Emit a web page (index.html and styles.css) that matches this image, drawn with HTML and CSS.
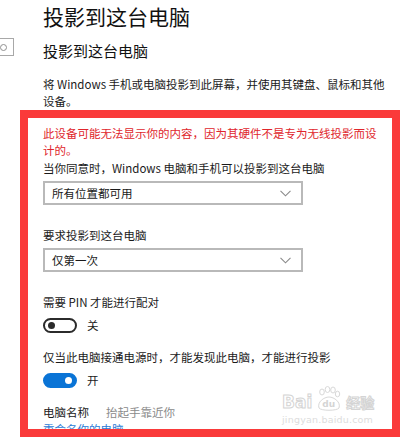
FILE: index.html
```html
<!doctype html>
<html>
<head>
    <meta charset="utf-8">
    <link rel="stylesheet" href="styles.css">
</head>
<body>
<div class="page">
    <div class="nav">
        <div class="search"><span class="search-ico"></span></div>
    </div>
    <div class="content">
        <h1 class="title">投影到这台电脑</h1>
        <h2 class="subtitle">投影到这台电脑</h2>
        <p class="desc">将 Windows 手机或电脑投影到此屏幕，并使用其键盘、鼠标和其他设备。</p>
        <p class="warn">此设备可能无法显示你的内容，因为其硬件不是专为无线投影而设计的。</p>

        <div class="label">当你同意时，Windows 电脑和手机可以投影到这台电脑</div>
        <div class="dropdown">
            <span>所有位置都可用</span>
            <svg class="chev" width="11" height="7" viewBox="0 0 11 7"><path d="M0.5 0.8 L5.5 5.8 L10.5 0.8" fill="none" stroke="#8a8a8a" stroke-width="1.1"/></svg>
        </div>

        <div class="label gap">要求投影到这台电脑</div>
        <div class="dropdown">
            <span>仅第一次</span>
            <svg class="chev" width="11" height="7" viewBox="0 0 11 7"><path d="M0.5 0.8 L5.5 5.8 L10.5 0.8" fill="none" stroke="#8a8a8a" stroke-width="1.1"/></svg>
        </div>

        <div class="label gap">需要 PIN 才能进行配对</div>
        <div class="switch-row">
            <span class="switch"><span class="knob"></span></span>
            <span>关</span>
        </div>

        <div class="label gap2">仅当此电脑接通电源时，才能发现此电脑，才能进行投影</div>
        <div class="switch-row">
            <span class="switch on"><span class="knob"></span></span>
            <span>开</span>
        </div>

        <div class="name-row">
            <span>电脑名称</span>
            <span class="muted">抬起手靠近你</span>
        </div>
        <div class="link">重命名你的电脑</div>
    </div>
</div>

<div class="mark"></div>

<div class="watermark">
    <div class="wm-logo">
        <span class="wm-bai">Bai</span>
        <span class="wm-paw">
            <svg width="28" height="26" viewBox="0 0 28 26">
                <g fill="none" stroke="#d8d8d8" stroke-width="1">
                    <ellipse cx="7" cy="6" rx="2.3" ry="3"/>
                    <ellipse cx="12.5" cy="3.5" rx="2.3" ry="3"/>
                    <ellipse cx="18" cy="4" rx="2.3" ry="3"/>
                    <ellipse cx="22.5" cy="8" rx="2.2" ry="2.8"/>
                    <path d="M4 22 C2 16 9 11 14 11 C19 11 26 16 24 22 C22 25 6 25 4 22 Z"/>
                </g>
            </svg>
            <span class="wm-du">du</span>
        </span>
        <span class="wm-jy">经验</span>
    </div>
    <div class="wm-url">jingyan.baidu.com</div>
</div>
</body>
</html>
```

FILE: styles.css
```css
html, body {
    margin: 0;
    padding: 0;
    background: #ffffff;
}
body {
    width: 400px;
    height: 441px;
    overflow: hidden;
    position: relative;
    font-family: "Noto Sans CJK SC", "Noto Sans", sans-serif;
    color: #1a1a1a;
}

.page {
    display: flex;
}

/* left nav, only its edge is visible */
.nav {
    width: 14px;
    flex: none;
    overflow: hidden;
    padding-top: 38px;
}
.search {
    margin-left: -20px;
    width: 32px;
    height: 16px;
    border: 1px solid #a8a8a8;
    position: relative;
}
.search-ico {
    position: absolute;
    right: 6px;
    top: 5px;
    width: 5px;
    height: 5px;
    border: 1px solid #909090;
    border-radius: 50%;
}

.content {
    width: 344px;
    padding-left: 29px;
    font-size: 11.5px;
    line-height: 17px;
}

.title {
    margin: 2px 0 0;
    font-size: 21px;
    line-height: 28px;
    font-weight: 400;
    color: #111;
}
.subtitle {
    margin: 11px 0 0;
    font-size: 15px;
    line-height: 20px;
    font-weight: 400;
    color: #111;
}
.desc {
    margin: 14.5px 0 0;
}
.warn {
    margin: 15px 0 0;
    color: #e0262c;
}

.label {
    margin-top: 1px;
}
.label.gap {
    margin-top: 21.5px;
}
.label.gap2 {
    margin-top: 15px;
}

.dropdown {
    margin-top: 4.5px;
    height: 20px;
    border: 2px solid #b9b9b9;
    display: flex;
    align-items: center;
    justify-content: space-between;
    padding: 0 10px 0 7px;
    width: 239px;
}
.chev {
    display: block;
}

.switch-row {
    margin-top: 6px;
    display: flex;
    align-items: center;
    gap: 10px;
    height: 17px;
}
.switch {
    width: 24px;
    height: 11px;
    border: 2px solid #2b2b2b;
    border-radius: 8px;
    display: flex;
    align-items: center;
    padding: 0 3px;
}
.switch .knob {
    width: 7px;
    height: 7px;
    border-radius: 50%;
    background: #2b2b2b;
}
.switch.on {
    background: #0a74d6;
    border-color: #0a74d6;
    justify-content: flex-end;
}
.switch.on .knob {
    background: #ffffff;
}

.name-row {
    margin-top: 15px;
    display: flex;
    gap: 17px;
}
.muted {
    color: #8a8a8a;
}
.link {
    color: #2b7bd6;
}

/* red annotation box drawn over the screenshot */
.mark {
    position: absolute;
    left: 20px;
    top: 110px;
    width: 364px;
    height: 311px;
    border: 8px solid #fa3a3a;
}

/* baidu watermark */
.watermark {
    position: absolute;
    left: 282px;
    top: 386px;
    color: #dadada;
}
.wm-logo {
    display: flex;
    align-items: flex-end;
    font-family: "DejaVu Sans", sans-serif;
    font-size: 17px;
    line-height: 20px;
}
.wm-bai {
    font-weight: bold;
    color: #ffffff;
    -webkit-text-stroke: 1px #d4d4d4;
}
.wm-paw {
    position: relative;
    width: 28px;
    height: 26px;
    margin: 0 3px;
}
.wm-paw svg {
    display: block;
}
.wm-du {
    position: absolute;
    left: 7px;
    top: 13px;
    font-size: 9px;
    line-height: 10px;
    font-weight: bold;
    color: #d4d4d4;
}
.wm-jy {
    font-family: "Noto Sans CJK SC", sans-serif;
    font-size: 14px;
    font-weight: bold;
    color: #ffffff;
    -webkit-text-stroke: 1px #d4d4d4;
}
.wm-url {
    margin-top: 3px;
    font-family: "DejaVu Sans", sans-serif;
    font-size: 9.5px;
    line-height: 10px;
    color: #dddddd;
    letter-spacing: 0.2px;
}
```
